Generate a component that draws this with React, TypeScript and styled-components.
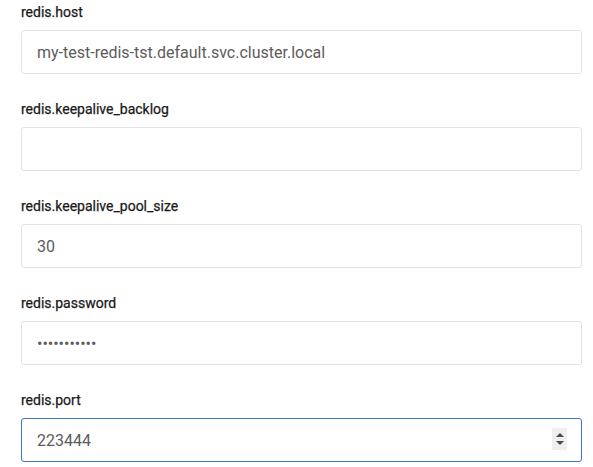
import React from 'react'
import styled, { createGlobalStyle } from 'styled-components'

const GlobalStyle = createGlobalStyle`
  html, body {
    margin: 0;
    padding: 0;
    background: #ffffff;
    font-family: Roboto, "Liberation Sans", sans-serif;
  }
`

const Form = styled.div`
  width: 593px;
  padding: 2px 11px 0 21px;
  box-sizing: border-box;
`

const Field = styled.div`
  display: flex;
  flex-direction: column;
  gap: 8px;
  margin-bottom: 25px;
`

const Label = styled.label`
  font-size: 14px;
  line-height: 20px;
  font-weight: 400;
  color: #1a1a1a;
  -webkit-text-stroke: 0.25px #1a1a1a;
`

const InputWrap = styled.div`
  position: relative;
`

const Input = styled.input<{ focused?: boolean }>`
  display: block;
  width: 100%;
  height: 44px;
  box-sizing: border-box;
  padding: 0 15px;
  border: 1px solid ${p => (p.focused ? '#3b73d3' : '#e3e3e3')};
  border-radius: 3px;
  font-family: Roboto, "Liberation Sans", sans-serif;
  font-size: 16px;
  color: #5c5c5c;
  background: #ffffff;
  outline: none;
`

const Spinner = styled.div`
  position: absolute;
  top: 10px;
  right: 15px;
  width: 15px;
  height: 22px;
  background: #efefef;
  display: flex;
  flex-direction: column;
  align-items: center;
  justify-content: center;
  gap: 4px;
`

const Arrow = styled.div<{ down?: boolean }>`
  width: 0;
  height: 0;
  border-left: 4px solid transparent;
  border-right: 4px solid transparent;
  ${p =>
    p.down ? 'border-top: 4px solid #4a4a4a;' : 'border-bottom: 4px solid #4a4a4a;'}
`

export default function App() {
  return (
    <>
      <GlobalStyle />
      <Form>
        <Field>
          <Label>redis.host</Label>
          <Input readOnly value="my-test-redis-tst.default.svc.cluster.local" />
        </Field>
        <Field>
          <Label>redis.keepalive_backlog</Label>
          <Input readOnly value="" />
        </Field>
        <Field>
          <Label>redis.keepalive_pool_size</Label>
          <Input readOnly value="30" />
        </Field>
        <Field>
          <Label>redis.password</Label>
          <Input readOnly type="password" value="abcdefghijk" />
        </Field>
        <Field>
          <Label>redis.port</Label>
          <InputWrap>
            <Input readOnly focused value="223444" />
            <Spinner>
              <Arrow />
              <Arrow down />
            </Spinner>
          </InputWrap>
        </Field>
      </Form>
    </>
  )
}
